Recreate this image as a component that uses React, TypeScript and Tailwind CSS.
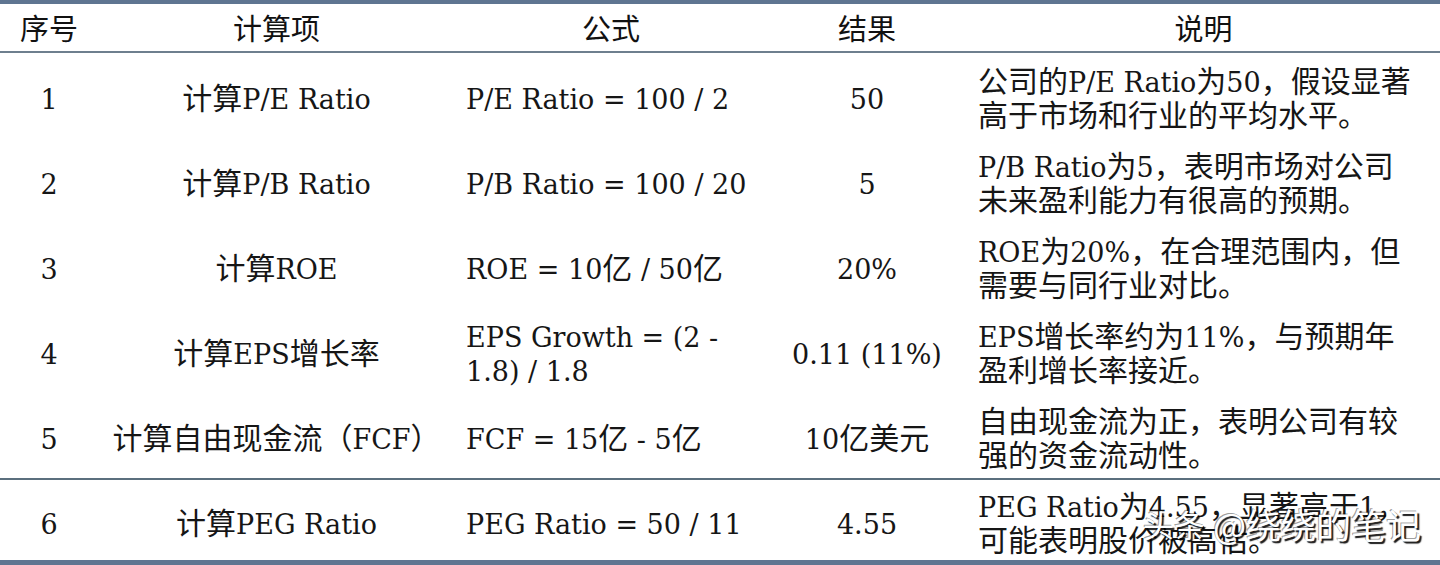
import React from "react";

const CJK = /([\u3000-\u303f\u4e00-\u9fff\uff00-\uffef]+)/;

function Mixed({ text }: { text: string }) {
  const parts = text.split(CJK);
  return (
    <>
      {parts.map((p, i) =>
        p === "" ? null : i % 2 === 1 ? (
          <span key={i} className="font-['Noto_Sans_CJK_SC',sans-serif] text-[30px]">
            {p}
          </span>
        ) : (
          <span key={i} className="font-['DejaVu_Serif','Noto_Sans_CJK_SC',serif] text-[27px]">
            {p}
          </span>
        )
      )}
    </>
  );
}

function Lines({ lines }: { lines: string[] }) {
  return (
    <div className="flex flex-col pt-[1px]">
      {lines.map((l, i) => (
        <div
          key={i}
          className="h-[34px] whitespace-pre font-['Noto_Sans_CJK_SC',sans-serif] text-[30px] leading-[34px]"
        >
          <Mixed text={l} />
        </div>
      ))}
    </div>
  );
}

type Row = {
  no: string;
  item: string;
  formula: string[];
  result: string;
  note: string[];
};

const rows: Row[] = [
  {
    no: "1",
    item: "计算P/E Ratio",
    formula: ["P/E Ratio = 100 / 2"],
    result: "50",
    note: ["公司的P/E Ratio为50，假设显著", "高于市场和行业的平均水平。"],
  },
  {
    no: "2",
    item: "计算P/B Ratio",
    formula: ["P/B Ratio = 100 / 20"],
    result: "5",
    note: ["P/B Ratio为5，表明市场对公司", "未来盈利能力有很高的预期。"],
  },
  {
    no: "3",
    item: "计算ROE",
    formula: ["ROE = 10亿 / 50亿"],
    result: "20%",
    note: ["ROE为20%，在合理范围内，但", "需要与同行业对比。"],
  },
  {
    no: "4",
    item: "计算EPS增长率",
    formula: ["EPS Growth = (2 -", "1.8) / 1.8"],
    result: "0.11 (11%)",
    note: ["EPS增长率约为11%，与预期年", "盈利增长率接近。"],
  },
  {
    no: "5",
    item: "计算自由现金流（FCF）",
    formula: ["FCF = 15亿 - 5亿"],
    result: "10亿美元",
    note: ["自由现金流为正，表明公司有较", "强的资金流动性。"],
  },
];

const last: Row = {
  no: "6",
  item: "计算PEG Ratio",
  formula: ["PEG Ratio = 50 / 11"],
  result: "4.55",
  note: ["PEG Ratio为4.55，显著高于1，", "可能表明股价被高估。"],
};

const gridCols = "grid grid-cols-[98px_357px_312px_200px_1fr]";

function DataRow({ r, h }: { r: Row; h: string }) {
  return (
    <div className={`${gridCols} ${h}`}>
      <div className="flex items-center justify-center">
        <Lines lines={[r.no]} />
      </div>
      <div className="flex items-center justify-center">
        <Lines lines={[r.item]} />
      </div>
      <div className="flex items-center pl-[11px]">
        <Lines lines={r.formula} />
      </div>
      <div className="flex items-center justify-center">
        <Lines lines={[r.result]} />
      </div>
      <div className="flex items-center pl-[11px]">
        <Lines lines={r.note} />
      </div>
    </div>
  );
}

export default function App() {
  const head = ["序号", "计算项", "公式", "结果", "说明"];
  return (
    <div className="relative w-[1440px] h-[565px] overflow-hidden bg-white text-[#161616]">
      <div className="h-[4px] bg-[#5f7591]" />
      <div className={`${gridCols} h-[47px]`}>
        {head.map((t) => (
          <div
            key={t}
            className="flex items-center justify-center font-['Noto_Sans_CJK_SC',sans-serif] font-normal text-[29px] text-[#111]"
          >
            {t}
          </div>
        ))}
      </div>
      <div className="h-[2px] bg-[#6e7f8e]" />
      {rows.map((r) => (
        <DataRow key={r.no} r={r} h="h-[85px]" />
      ))}
      <div className="h-[2px] bg-[#5b6f7e]" />
      <DataRow r={last} h="h-[80px]" />
      <div className="h-[5px] bg-[#5f7591]" />

      <div className="absolute left-[1143px] top-[502px] flex items-end gap-[8px] font-['Noto_Sans_CJK_SC',sans-serif] text-white [text-shadow:2px_2px_1px_rgba(0,0,0,0.9),-1px_-1px_0_rgba(0,0,0,0.4)]">
        <span className="text-[31px] leading-[44px]">头条</span>
        <span className="text-[35px] leading-[44px]">@绕绕的笔记</span>
      </div>
    </div>
  );
}
